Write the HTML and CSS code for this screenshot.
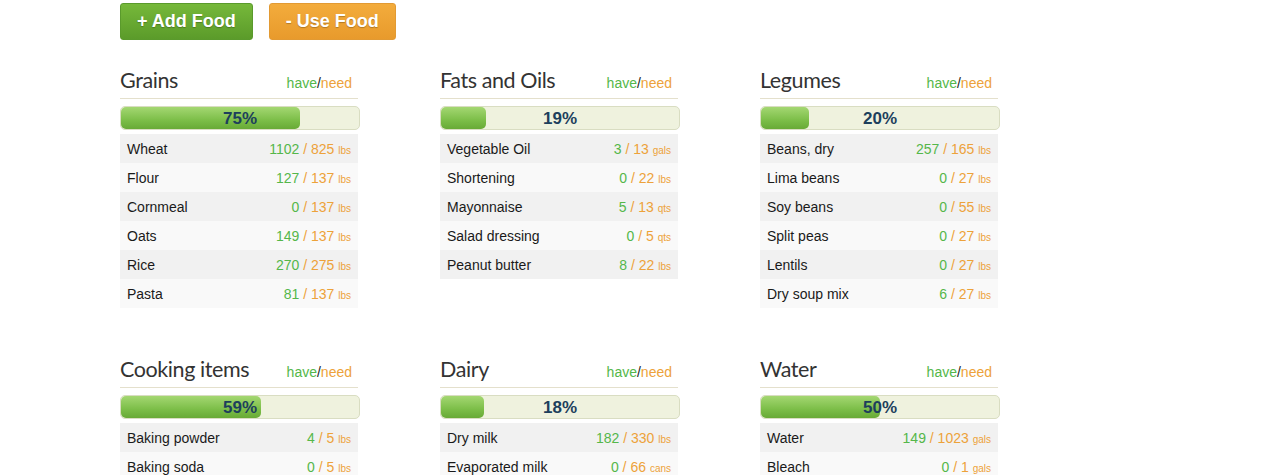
FILE: index.html
```html
<!DOCTYPE html>
<html lang="en">
<head>
    <meta charset="UTF-8">
    <title>Food Storage</title>
    <link rel="stylesheet" href="styles.css">
</head>
<body>
    <div class="page">
        <div class="actions">
            <a href="#" class="button add">+ Add Food</a>
            <a href="#" class="button use">- Use Food</a>
        </div>

        <div class="groups">
            <!-- Grains -->
            <div class="group">
                <div class="group-head">
                    <h2>Grains</h2>
                    <span class="legend"><span class="have">have</span>/<span class="need">need</span></span>
                </div>
                <div class="bar"><div class="fill" style="width: 75%"></div><span class="pct">75%</span></div>
                <ul class="items">
                    <li><span>Wheat</span><span class="qty"><span class="have">1102</span> / <span class="need">825 <small>lbs</small></span></span></li>
                    <li><span>Flour</span><span class="qty"><span class="have">127</span> / <span class="need">137 <small>lbs</small></span></span></li>
                    <li><span>Cornmeal</span><span class="qty"><span class="have">0</span> / <span class="need">137 <small>lbs</small></span></span></li>
                    <li><span>Oats</span><span class="qty"><span class="have">149</span> / <span class="need">137 <small>lbs</small></span></span></li>
                    <li><span>Rice</span><span class="qty"><span class="have">270</span> / <span class="need">275 <small>lbs</small></span></span></li>
                    <li><span>Pasta</span><span class="qty"><span class="have">81</span> / <span class="need">137 <small>lbs</small></span></span></li>
                </ul>
            </div>

            <!-- Fats and Oils -->
            <div class="group">
                <div class="group-head">
                    <h2>Fats and Oils</h2>
                    <span class="legend"><span class="have">have</span>/<span class="need">need</span></span>
                </div>
                <div class="bar"><div class="fill" style="width: 19%"></div><span class="pct">19%</span></div>
                <ul class="items">
                    <li><span>Vegetable Oil</span><span class="qty"><span class="have">3</span> / <span class="need">13 <small>gals</small></span></span></li>
                    <li><span>Shortening</span><span class="qty"><span class="have">0</span> / <span class="need">22 <small>lbs</small></span></span></li>
                    <li><span>Mayonnaise</span><span class="qty"><span class="have">5</span> / <span class="need">13 <small>qts</small></span></span></li>
                    <li><span>Salad dressing</span><span class="qty"><span class="have">0</span> / <span class="need">5 <small>qts</small></span></span></li>
                    <li><span>Peanut butter</span><span class="qty"><span class="have">8</span> / <span class="need">22 <small>lbs</small></span></span></li>
                </ul>
            </div>

            <!-- Legumes -->
            <div class="group">
                <div class="group-head">
                    <h2>Legumes</h2>
                    <span class="legend"><span class="have">have</span>/<span class="need">need</span></span>
                </div>
                <div class="bar"><div class="fill" style="width: 20%"></div><span class="pct">20%</span></div>
                <ul class="items">
                    <li><span>Beans, dry</span><span class="qty"><span class="have">257</span> / <span class="need">165 <small>lbs</small></span></span></li>
                    <li><span>Lima beans</span><span class="qty"><span class="have">0</span> / <span class="need">27 <small>lbs</small></span></span></li>
                    <li><span>Soy beans</span><span class="qty"><span class="have">0</span> / <span class="need">55 <small>lbs</small></span></span></li>
                    <li><span>Split peas</span><span class="qty"><span class="have">0</span> / <span class="need">27 <small>lbs</small></span></span></li>
                    <li><span>Lentils</span><span class="qty"><span class="have">0</span> / <span class="need">27 <small>lbs</small></span></span></li>
                    <li><span>Dry soup mix</span><span class="qty"><span class="have">6</span> / <span class="need">27 <small>lbs</small></span></span></li>
                </ul>
            </div>

            <!-- Cooking items -->
            <div class="group">
                <div class="group-head">
                    <h2>Cooking items</h2>
                    <span class="legend"><span class="have">have</span>/<span class="need">need</span></span>
                </div>
                <div class="bar"><div class="fill" style="width: 59%"></div><span class="pct">59%</span></div>
                <ul class="items">
                    <li><span>Baking powder</span><span class="qty"><span class="have">4</span> / <span class="need">5 <small>lbs</small></span></span></li>
                    <li><span>Baking soda</span><span class="qty"><span class="have">0</span> / <span class="need">5 <small>lbs</small></span></span></li>
                </ul>
            </div>

            <!-- Dairy -->
            <div class="group">
                <div class="group-head">
                    <h2>Dairy</h2>
                    <span class="legend"><span class="have">have</span>/<span class="need">need</span></span>
                </div>
                <div class="bar"><div class="fill" style="width: 18%"></div><span class="pct">18%</span></div>
                <ul class="items">
                    <li><span>Dry milk</span><span class="qty"><span class="have">182</span> / <span class="need">330 <small>lbs</small></span></span></li>
                    <li><span>Evaporated milk</span><span class="qty"><span class="have">0</span> / <span class="need">66 <small>cans</small></span></span></li>
                </ul>
            </div>

            <!-- Water -->
            <div class="group">
                <div class="group-head">
                    <h2>Water</h2>
                    <span class="legend"><span class="have">have</span>/<span class="need">need</span></span>
                </div>
                <div class="bar"><div class="fill" style="width: 50%"></div><span class="pct">50%</span></div>
                <ul class="items">
                    <li><span>Water</span><span class="qty"><span class="have">149</span> / <span class="need">1023 <small>gals</small></span></span></li>
                    <li><span>Bleach</span><span class="qty"><span class="have">0</span> / <span class="need">1 <small>gals</small></span></span></li>
                </ul>
            </div>
        </div>
    </div>
</body>
</html>
```

FILE: styles.css
```css
/* Reset and base styles */
* {
    margin: 0;
    padding: 0;
    box-sizing: border-box;
}

body {
    font-family: "Liberation Sans", Arial, sans-serif;
    font-size: 14px;
    background: #fff;
    color: #1a1a1a;
}

.page {
    padding: 3px 0 0 120px;
}

/* Buttons */
.actions {
    display: flex;
    gap: 16px;
    margin-bottom: 27px;
}

.button {
    display: inline-block;
    height: 37px;
    line-height: 35px;
    padding: 0 16px;
    color: #fff;
    font-size: 18px;
    font-weight: bold;
    text-decoration: none;
    border-radius: 3px;
    text-shadow: 0 1px 1px rgba(0, 0, 0, 0.25);
}

.button.add {
    background: linear-gradient(#76b83a, #5b9b2a);
    border: 1px solid #5a9a2c;
}

.button.use {
    background: linear-gradient(#f3ac3c, #e89a2c);
    border: 1px solid #e29a33;
}

/* Groups */
.groups {
    display: grid;
    grid-template-columns: repeat(3, 240px);
    column-gap: 80px;
    row-gap: 48px;
}

.group-head {
    display: flex;
    justify-content: space-between;
    align-items: baseline;
    width: 238px;
    height: 32px;
    padding-right: 6px;
    border-bottom: 1px solid #e4e0cc;
}

.group-head h2 {
    font-family: Lato, "Open Sans", sans-serif;
    font-size: 21.5px;
    font-weight: normal;
    color: #333;
    line-height: 27px;
    letter-spacing: -0.4px;
}

.legend {
    font-size: 14px;
}

.have {
    color: #55b74a;
}

.need {
    color: #eda23a;
}

/* Progress bar */
.bar {
    position: relative;
    width: 240px;
    height: 24px;
    margin-top: 7px;
    background: #eff2de;
    border: 1px solid #d9ddc2;
    border-radius: 5px;
}

.fill {
    height: 100%;
    background: linear-gradient(#a4d772, #7cbe48 60%, #68aa36);
    border-radius: 5px;
}

.pct {
    position: absolute;
    top: 0;
    left: 0;
    right: 0;
    text-align: center;
    line-height: 24px;
    font-size: 17px;
    font-weight: bold;
    color: #1d3f5c;
}

/* Item rows */
.items {
    list-style: none;
    width: 238px;
    margin-top: 4px;
}

.items li {
    display: flex;
    justify-content: space-between;
    align-items: center;
    height: 29px;
    padding: 0 7px;
    background: #f9f9f9;
}

.items li:nth-child(odd) {
    background: #f1f1f1;
}

.qty {
    color: #eda23a;
}

.qty small {
    font-size: 10px;
}
```
